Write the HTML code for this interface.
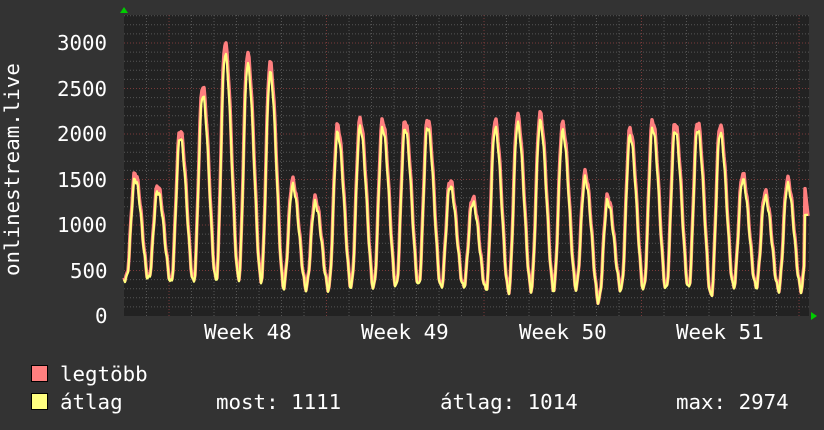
<!DOCTYPE html>
<html><head><meta charset="utf-8"><style>
html,body{margin:0;padding:0;background:#333;}
body{width:824px;height:430px;overflow:hidden;position:relative;font-family:"DejaVu Sans Mono","Liberation Mono",monospace;color:#fff;}
.t{position:absolute;font-size:20.8px;line-height:20px;white-space:pre;}
.sq{position:absolute;width:15px;height:15px;border:1px solid #000;}
</style></head><body>
<svg id="g" width="824" height="430" style="position:absolute;left:0;top:0">
<rect x="124" y="15" width="685" height="301" fill="#222"/>
<g id="grid"></g>
<path id="red" fill="none" stroke="#ff7f7f" stroke-width="3.5" stroke-linejoin="round"/>
<path id="yel" fill="none" stroke="#ffff7f" stroke-width="2.2" stroke-linejoin="round"/>
<polygon points="120,13 128,13 124,7" fill="#0c0"/>
<polygon points="811,312 811,320 817,316" fill="#0c0"/>
</svg>
<div class="t" style="left:57px;top:33px">3000</div>
<div class="t" style="left:57px;top:79px">2500</div>
<div class="t" style="left:57px;top:124px">2000</div>
<div class="t" style="left:57px;top:170px">1500</div>
<div class="t" style="left:57px;top:215px">1000</div>
<div class="t" style="left:70px;top:261px">500</div>
<div class="t" style="left:95px;top:306px">0</div>
<div class="t" style="left:0;top:0;transform-origin:0 0;transform:translate(2px,276px) rotate(-90deg);">onlinestream.live</div>
<div class="t" style="left:204px;top:322px">Week 48</div>
<div class="t" style="left:361px;top:322px">Week 49</div>
<div class="t" style="left:519px;top:322px">Week 50</div>
<div class="t" style="left:676px;top:322px">Week 51</div>
<div class="sq" style="left:31px;top:365px;background:#ff7f7f"></div>
<div class="sq" style="left:31px;top:393px;background:#ffff7f"></div>
<div class="t" style="left:60px;top:364px">legtöbb</div>
<div class="t" style="left:60px;top:392px">átlag</div>
<div class="t" style="left:216px;top:392px">most: 1111</div>
<div class="t" style="left:440px;top:392px">átlag: 1014</div>
<div class="t" style="left:676px;top:392px">max: 2974</div>
<script>
(function(){
var g=document.getElementById('grid'),s="";
for(var v=100;v<=3300;v+=100){var y=316-v*0.091;if(y<15)break;
 s+='<line x1="124" x2="809" y1="'+y+'" y2="'+y+'" stroke="'+(v%500==0?'#7a3a3a':'#555')+'" stroke-dasharray="1,2"/>';}
for(var x=124+22.5;x<809;x+=22.5){var m=((x-169)%157.5+157.5)%157.5;var maj=m<1||m>156.5;
 s+='<line x1="'+x+'" x2="'+x+'" y1="15" y2="316" stroke="'+(maj?'#7a3a3a':'#555')+'" stroke-dasharray="1,2"/>';}
g.innerHTML=s;
var peaks=[1570,1430,2050,2530,3000,2880,2780,1490,1290,2090,2160,2150,2150,2170,1490,1300,2150,2200,2220,2110,1570,1310,2060,2150,2130,2140,2100,1560,1360,1500,1500];
var troughs=[420,380,380,400,420,400,330,320,310,330,320,330,340,320,330,300,280,300,300,320,170,300,300,300,310,220,330,330,300,300];
var r="",yv="";
function val(x,k){
 var p0=135-22.5;var t=(x-p0)/22.5;var i=Math.floor(t);var f=t-i;
 var a=peaks[Math.max(0,i-1)]||peaks[0],b=peaks[Math.min(peaks.length-1,i)];
 if(i<1)a=600;
 var tr=troughs[Math.max(0,Math.min(troughs.length-1,i-1))];
 var v;
 if(f<0.6){var u=f/0.6;v=tr+(a-tr)*Math.pow((1+Math.cos(Math.PI*u))/2,0.9);}
 else{var u=(f-0.6)/0.4;v=tr+(b-tr)*Math.pow((1-Math.cos(Math.PI*u))/2,1.1);}
 v+=Math.sin(x*1.7)*40;
 return v*k;
}
for(var x=124;x<=808;x+=1){
 var a=val(x,1),b=val(x,0.96);
 if(x>804){a=1500-(x-804)*100;b=1111;}
 r+=(x==124?'M':'L')+x+','+(316-a*0.091).toFixed(1);
 yv+=(x==124?'M':'L')+x+','+(316-b*0.091).toFixed(1);
}
document.getElementById('red').setAttribute('d',r);
document.getElementById('yel').setAttribute('d',yv);
})();
</script>
</body></html>
